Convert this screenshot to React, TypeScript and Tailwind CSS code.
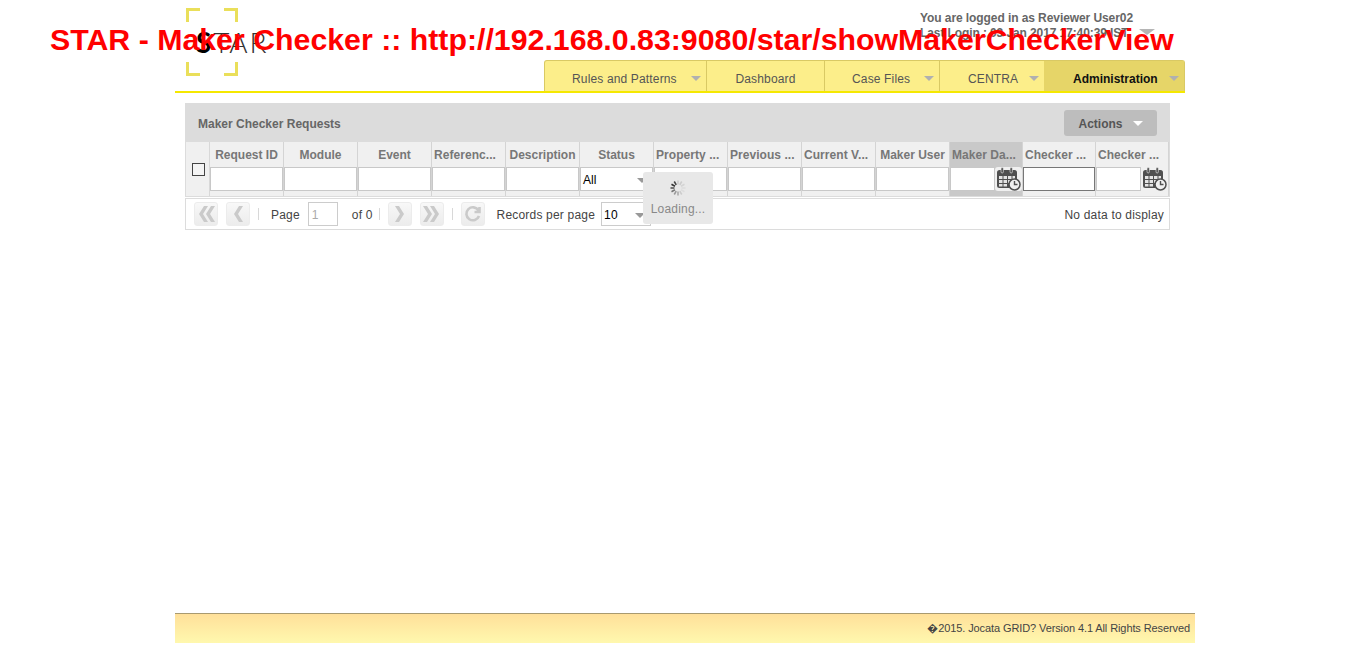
import React from 'react';

const navItems = [
  { label: 'Rules and Patterns', box: 'w-[161px] pl-[27px] tracking-[0.15px]', arrow: true, active: false },
  { label: 'Dashboard', box: 'w-[118px] justify-center tracking-[0.15px]', arrow: false, active: false },
  { label: 'Case Files', box: 'w-[115px] pl-[27px] tracking-[0.15px]', arrow: true, active: false },
  { label: 'CENTRA', box: 'w-[105px] pl-[28px] tracking-[0.15px]', arrow: true, active: false },
  { label: 'Administration', box: 'w-[140px] pl-[29px]', arrow: true, active: true },
];

const columns = [
  { label: 'Request ID', width: 'w-[74px]' },
  { label: 'Module', width: 'w-[74px]' },
  { label: 'Event', width: 'w-[74px]' },
  { label: 'Referenc...', width: 'w-[74px]' },
  { label: 'Description', width: 'w-[74px]' },
  { label: 'Status', width: 'w-[74px]', select: true },
  { label: 'Property ...', width: 'w-[74px]' },
  { label: 'Previous ...', width: 'w-[74px]' },
  { label: 'Current V...', width: 'w-[74px]' },
  { label: 'Maker User', width: 'w-[74px]' },
  { label: 'Maker Da...', width: 'w-[73px]', date: true, sorted: true },
  { label: 'Checker ...', width: 'w-[73px]', focused: true },
  { label: 'Checker ...', width: 'w-[73px]', date: true },
];

const Arrow = ({ className }: { className: string }) => (
  <span className={`inline-block h-0 w-0 border-x-[5px] border-t-[5px] border-x-transparent ${className}`} />
);

const CalendarIcon = () => (
  <svg width="25" height="24" viewBox="0 0 25 24" className="shrink-0">
    <rect x="1" y="3" width="20" height="18" rx="2.5" fill="#505050" />
    <rect x="5" y="0.5" width="2.4" height="5.5" rx="1.2" fill="#505050" stroke="#f0f0f0" strokeWidth="0.6" />
    <rect x="14" y="0.5" width="2.4" height="5.5" rx="1.2" fill="#505050" stroke="#f0f0f0" strokeWidth="0.6" />
    <path d="M3 9h3.5v3H3zM7.5 9H11v3H7.5zM12 9h3.5v3H12zM16.5 9H19v3h-2.5zM3 13h3.5v3H3zM7.5 13H11v3H7.5zM12 13h3.5v3H12zM3 17h3.5v2.5H3zM7.5 17H11v2.5H7.5z" fill="#e4e4e4" />
    <circle cx="18.5" cy="17.5" r="5.5" fill="#f0f0f0" stroke="#505050" strokeWidth="1.5" />
    <path d="M18.5 14v3.5h3" fill="none" stroke="#505050" strokeWidth="1.4" />
  </svg>
);

const Spinner = () => (
  <svg width="18" height="18" viewBox="0 0 18 18">
    {[0, 30, 60, 90, 120, 150, 180, 210, 240, 270, 300, 330].map((deg, i) => (
      <line
        key={deg}
        x1="9"
        y1="1.5"
        x2="9"
        y2="5.5"
        strokeWidth="1.6"
        stroke={['#ccc', '#ccc', '#d4d4d4', '#ddd', '#ddd', '#ccc', '#aaa', '#999', '#777', '#555', '#333', '#444'][i]}
        transform={`rotate(${deg} 9 9)`}
      />
    ))}
  </svg>
);

const PagerButton = ({ d, stroke }: { d: string; stroke?: boolean }) => (
  <span className="flex h-6 w-6 items-center justify-center rounded-[3px] border border-[#ececec] bg-gradient-to-b from-[#f8f8f8] to-[#ececec]">
    <svg width="20" height="18" viewBox="0 0 20 18">
      <path
        d={d}
        fill={stroke ? 'none' : '#cacaca'}
        stroke={stroke ? '#cacaca' : 'none'}
        strokeWidth={stroke ? 2.6 : 0}
      />
    </svg>
  </span>
);

const Divider = () => <span className="h-3 w-px bg-[#d8d8d8]" />;

export default function App() {
  return (
    <div className="relative flex min-h-[658px] flex-col font-['Liberation_Sans',Arial,sans-serif]">
      {/* page title stamped over the whole screen */}
      <div className="absolute left-[50px] top-[21px] z-20 whitespace-nowrap text-[30.3px] font-bold leading-[37px] text-[#ff0000]">
        STAR - Maker Checker :: http://192.168.0.83:9080/star/showMakerCheckerView
      </div>

      <div className="ml-[175px] w-[1010px]">
        {/* header */}
        <div className="relative flex h-[93px] items-end justify-end border-b-2 border-[#f5e800]">
          <div className="absolute left-[11px] top-[8px] h-[68px] w-[52px]">
            <span className="absolute left-0 top-0 h-[14px] w-[14px] border-l-[3px] border-t-[3px] border-[#eadf5a]" />
            <span className="absolute right-0 top-0 h-[14px] w-[14px] border-r-[3px] border-t-[3px] border-[#eadf5a]" />
            <span className="absolute bottom-0 left-0 h-[14px] w-[14px] border-b-[3px] border-l-[3px] border-[#eadf5a]" />
            <span className="absolute bottom-0 right-0 h-[14px] w-[14px] border-b-[3px] border-r-[3px] border-[#eadf5a]" />
            <span className="absolute left-[10px] top-[17px] whitespace-nowrap font-['Lato',sans-serif] text-[28px] font-light leading-[34px] tracking-[1.8px] text-[#333]">
              <span className="font-bold text-black">S</span>TAR
            </span>
          </div>

          <div className="absolute left-[745px] top-[11px] text-xs font-bold leading-[15px] text-[#666]">
            <div className="tracking-[-0.08px]">You are logged in as Reviewer User02</div>
            <div className="tracking-[-0.1px]">Last Login : 03 Jan 2017 17:40:39 IST</div>
          </div>
          <span className="absolute left-[964px] top-[29px] h-0 w-0 border-x-[8px] border-t-[6px] border-x-transparent border-t-[#b5b5b5]" />

          <nav className="flex h-[31px] rounded-t-[3px] border border-b-0 border-[#d9c964] bg-[#fcee8a]">
            {navItems.map((item, i) => (
              <div
                key={item.label}
                className={`relative flex items-center pt-[5px] text-xs ${item.box} ${i > 0 ? 'border-l border-[#d9c964]' : ''} ${
                  item.active ? 'border-l-0 bg-[#e6d568] font-bold text-[#111]' : 'text-[#555]'
                }`}
              >
                {item.label}
                {item.arrow && <Arrow className="absolute right-[5px] top-[15px] border-t-[#b0b0b0]" />}
              </div>
            ))}
          </nav>
        </div>

        {/* grid panel */}
        <div className="relative ml-[10px] mt-[10px] w-[985px]">
          <div className="flex h-[39px] items-center justify-between bg-[#dcdcdc] px-[13px] pt-[2px]">
            <span className="text-xs font-bold text-[#666]">Maker Checker Requests</span>
            <span className="-mt-[2px] flex h-[26px] w-[93px] items-center justify-center gap-[10px] rounded-[3px] bg-[#bdbdbd] pt-[2px] text-xs font-bold text-[#555]">
              Actions
              <Arrow className="border-t-white" />
            </span>
          </div>

          <div className="flex h-[55px] border-x border-b border-[#dcdcdc] bg-[#f0f0f0]">
            <div className="flex w-[24px] shrink-0 items-start justify-center border-r border-[#d8d8d8] pl-px pt-[21px]">
              <span className="h-[13px] w-[13px] border border-[#444] bg-[#f4f4f4]" />
            </div>
            {columns.map((col, i) => (
              <div
                key={i}
                className={`flex shrink-0 flex-col border-r border-[#d4d4d4] ${col.width} ${col.sorted ? 'bg-[#c9c9c9]' : ''}`}
              >
                <div
                  className={`flex h-[25px] items-center whitespace-nowrap text-xs font-bold text-[#777] ${
                    col.label.endsWith('...') ? 'justify-start pl-[2px] tracking-[0.05px]' : 'justify-center'
                  }`}
                >
                  {col.label}
                </div>
                <div className="flex h-[24px]">
                  {col.select ? (
                    <div className="flex flex-1 items-center justify-between border border-[#c8c8c8] bg-white pl-[2px] pr-[5px] pt-[2px] text-xs text-black">
                      All
                      <Arrow className="border-t-[#999]" />
                    </div>
                  ) : (
                    <div
                      className={`min-w-0 flex-1 border bg-white ${
                        col.focused ? 'border-[#777]' : 'border-[#c8c8c8]'
                      }`}
                    />
                  )}
                  {col.date && (
                    <span className="flex w-[27px] shrink-0 items-center justify-center rounded-[3px] bg-[#f0f0f0]">
                      <CalendarIcon />
                    </span>
                  )}
                </div>
              </div>
            ))}
          </div>

          <div className="mt-px flex h-[32px] items-center justify-between border border-[#dcdcdc] bg-white pl-[8px] pr-[5px] text-xs tracking-[0.19px] text-[#444]">
            <div className="flex items-center">
              <PagerButton d="M8 1h4L7 9l5 8H8L3 9zM15 1h4l-5 8 5 8h-4l-5-8z" />
              <span className="w-2" />
              <PagerButton d="M11 1h4l-5 8 5 8h-4L6 9z" />
              <span className="w-2" />
              <Divider />
              <span className="ml-3 pt-[2px]">Page</span>
              <span className="ml-2 flex h-6 w-[30px] items-center border border-[#ccc] pl-[3px] pt-[2px] text-[#aaa]">1</span>
              <span className="ml-[14px] pt-[2px]">of 0</span>
              <span className="w-[6px]" />
              <Divider />
              <span className="w-2" />
              <PagerButton d="M5 1h4l5 8-5 8H5l5-8z" />
              <span className="w-2" />
              <PagerButton d="M1 1h4l5 8-5 8H1l5-8zM8 1h4l5 8-5 8H8l5-8z" />
              <span className="w-2" />
              <Divider />
              <span className="w-2" />
              <PagerButton stroke d="M15.5 5.5A6.5 6.5 0 1 0 16 11M16.5 2v5h-5" />
              <span className="ml-3 pt-[2px]">Records per page</span>
              <span className="ml-[6px] flex h-6 w-[50px] items-center justify-between border border-[#ccc] pl-[2px] pr-[5px] pt-[2px] text-black">
                10
                <Arrow className="border-t-[#999]" />
              </span>
            </div>
            <span className="pt-[2px]">No data to display</span>
          </div>

          {/* loading mask over the grid */}
          <div className="absolute left-[458px] top-[69px] flex h-[52px] w-[70px] flex-col items-center rounded-[3px] bg-[#e8e8e8] pt-[7px] text-xs tracking-[0.2px] text-[#888]">
            <Spinner />
            <span className="mt-[4px]">Loading...</span>
          </div>
        </div>
      </div>

      <footer className="mb-[15px] ml-[175px] mt-auto flex h-[30px] w-[1020px] items-center justify-end border-t border-[#a89a70] bg-gradient-to-b from-[#ffe09a] to-[#fff8ae] pr-[5px] text-[11px] tracking-[-0.1px] text-[#444]">
        �2015. Jocata GRID? Version 4.1 All Rights Reserved
      </footer>
    </div>
  );
}
